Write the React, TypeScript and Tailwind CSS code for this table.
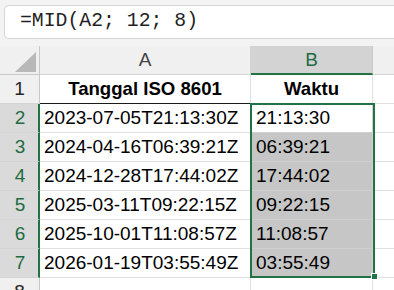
import React from "react";

const rows = [
  { iso: "2023-07-05T21:13:30Z", time: "21:13:30" },
  { iso: "2024-04-16T06:39:21Z", time: "06:39:21" },
  { iso: "2024-12-28T17:44:02Z", time: "17:44:02" },
  { iso: "2025-03-11T09:22:15Z", time: "09:22:15" },
  { iso: "2025-10-01T11:08:57Z", time: "11:08:57" },
  { iso: "2026-01-19T03:55:49Z", time: "03:55:49" },
];

const sans = { fontFamily: '"Liberation Sans", Arial, sans-serif' };

function RowHeader({ label, selected }: { label: string; selected?: boolean }) {
  return (
    <div
      className={
        "flex h-[29px] items-center justify-center border-b border-[#d4d4d4] text-[19px] " +
        (selected
          ? "border-r-2 border-r-[#217346] bg-[#dadada] pl-[2px] text-[#1e6b41]"
          : "border-r border-r-[#c8c8c8] bg-[#f0f0f0] text-[#262626]")
      }
    >
      {label}
    </div>
  );
}

export default function App() {
  return (
    <div className="h-[290px] w-[394px] overflow-hidden bg-[#f3f3f3]" style={sans}>
      <div className="pl-[4px] pt-[5px]">
        <div className="flex h-[34px] items-center rounded-l-[5px] border border-r-0 border-[#d6d6d6] bg-white pl-[15px]">
          <span
            className="text-[19.8px] text-[#1f1f1f]"
            style={{ fontFamily: '"Liberation Mono", "Courier New", monospace' }}
          >
            =MID(A2; 12; 8)
          </span>
        </div>
      </div>

      <div className="relative mt-[7px]">
        <div className="grid grid-cols-[40px_211px_122px_21px] bg-white">
          {/* header row */}
          <div className="relative h-[29px] border-b border-r border-[#c8c8c8] bg-[#f0f0f0]">
            <svg className="absolute left-[15px] top-[6px]" width="21" height="20" viewBox="0 0 21 20">
              <polygon points="21,0 21,20 0,20" fill="#b8b8b8" />
            </svg>
          </div>
          <div className="flex h-[29px] items-center justify-center border-b border-r border-[#d4d4d4] bg-[#f0f0f0] text-[19px] text-[#444]">
            A
          </div>
          <div className="flex h-[29px] items-center justify-center border-b-2 border-r border-b-[#217346] border-r-[#c8c8c8] bg-[#d3d3d3] pt-[1px] text-[19px] text-[#1e6b41]">
            B
          </div>
          <div className="h-[29px] border-b border-[#d4d4d4] bg-[#f0f0f0]" />

          {/* row 1 */}
          <RowHeader label="1" />
          <div className="flex h-[29px] items-center justify-center border-b border-r border-b-[#1a1a1a] border-r-[#e1e1e1] text-[18.6px] font-bold text-black">
            Tanggal ISO 8601
          </div>
          <div className="flex h-[29px] items-center justify-center border-b border-r border-[#e1e1e1] text-[18.6px] font-bold text-black">
            Waktu
          </div>
          <div className="h-[29px] border-b border-[#e1e1e1]" />

          {rows.map((row, i) => (
            <React.Fragment key={row.iso}>
              <RowHeader label={String(i + 2)} selected />
              <div className="flex h-[29px] items-center border-b border-r border-[#e1e1e1] pl-[4px] text-[19px] text-black">
                {row.iso}
              </div>
              <div
                className={
                  "flex h-[29px] items-center border-b border-r border-[#d0d0d0] pl-[5px] text-[19px] text-black " +
                  (i === 0 ? "bg-white" : "bg-[#c6c6c6]")
                }
              >
                {row.time}
              </div>
              <div className="h-[29px] border-b border-[#e1e1e1]" />
            </React.Fragment>
          ))}

          <RowHeader label="8" />
          <div className="h-[29px] border-r border-[#e1e1e1]" />
          <div className="h-[29px] border-r border-[#e1e1e1]" />
          <div className="h-[29px]" />
        </div>

        {/* selection outline */}
        <div className="pointer-events-none absolute left-[250px] top-[57px] h-[175px] w-[125px] border-2 border-[#217346]" />
        <div className="pointer-events-none absolute left-[371px] top-[227px] h-[7px] w-[7px] border border-white bg-[#217346]" />
      </div>
    </div>
  );
}
